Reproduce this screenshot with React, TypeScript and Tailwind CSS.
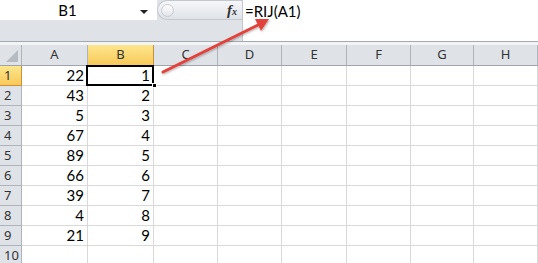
import React from 'react';

const columns = [
  { label: 'A', w: 'w-[66px]' },
  { label: 'B', w: 'w-[66px]' },
  { label: 'C', w: 'w-[64px]' },
  { label: 'D', w: 'w-[64px]' },
  { label: 'E', w: 'w-[65px]' },
  { label: 'F', w: 'w-[64px]' },
  { label: 'G', w: 'w-[63px]' },
  { label: 'H', w: 'w-[64px]' },
];

const data: [number | null, number | null][] = [
  [22, 1],
  [43, 2],
  [5, 3],
  [67, 4],
  [89, 5],
  [66, 6],
  [39, 7],
  [4, 8],
  [21, 9],
  [null, null],
];

function FormulaBar() {
  return (
    <div className="flex h-[42px] border-b border-[#a3a9b0]">
      <div className="flex w-[242px] flex-col bg-[#dfe3e8]">
        <div className="flex h-[20px]">
          <div className="relative flex w-[157px] items-center justify-center bg-white text-[15px] text-black">
            <span className="pr-[22px]">B1</span>
            <span className="absolute right-[9px] top-[10px] h-0 w-0 border-x-[4px] border-t-[4px] border-x-transparent border-t-[#222]" />
          </div>
          <div className="flex flex-1 items-center rounded-l-[11px] border border-r-0 border-[#c3c8ce] bg-gradient-to-b from-[#f6f7f9] to-[#dfe3e8] pl-[3px]">
            <span className="h-[13px] w-[13px] rounded-full border border-[#c8ccd2] bg-gradient-to-b from-[#fdfdfe] to-[#e2e5e9]" />
            <span className="ml-auto mr-[5px] font-['Liberation_Serif',serif] text-[15px] font-bold italic leading-none text-[#333]">
              f<span className="text-[10px]">x</span>
            </span>
          </div>
        </div>
      </div>
      <div className="flex-1 border-l border-[#c3c8ce] bg-white pl-[2px] pt-[1px] text-[15px] leading-[20px] text-black">
        =RIJ(A1)
      </div>
    </div>
  );
}

function Sheet() {
  return (
    <div className="flex flex-col">
      <div className="flex h-[21px] border-b border-[#9ea4ab] bg-[#dfe3e8] font-['Noto_Sans',sans-serif] text-[13px] text-[#333]">
        <div className="relative w-[22px] border-r border-[#aeb4bb]">
          <span className="absolute bottom-[3px] right-[3px] h-0 w-0 border-b-[12px] border-l-[12px] border-b-[#b6bbc1] border-l-transparent" />
        </div>
        {columns.map((c) =>
          c.label === 'B' ? (
            <div
              key={c.label}
              className={`${c.w} flex shrink-0 items-center justify-center border-r border-[#c9913c] bg-gradient-to-b from-[#fde68c] to-[#f8c957]`}
            >
              {c.label}
            </div>
          ) : (
            <div
              key={c.label}
              className={`${c.w} flex shrink-0 items-center justify-center border-r border-[#aeb4bb]`}
            >
              {c.label}
            </div>
          )
        )}
      </div>
      {data.map((row, i) => (
        <div key={i} className="flex h-[20px]">
          {i === 0 ? (
            <div className="flex w-[22px] shrink-0 items-center border-b border-r border-[#c9913c] bg-gradient-to-b from-[#fde68c] to-[#f8c957] pl-[4px] font-['Noto_Sans',sans-serif] text-[13px] text-[#333]">
              {i + 1}
            </div>
          ) : (
            <div className="flex w-[22px] shrink-0 items-center border-b border-r border-[#aeb4bb] bg-[#dfe3e8] pl-[4px] font-['Noto_Sans',sans-serif] text-[13px] text-[#333]">
              {i + 1}
            </div>
          )}
          {columns.map((c, j) => (
            <div
              key={c.label}
              className={`${c.w} flex shrink-0 items-center justify-end border-b border-r border-[#d9d9d9] pr-[3px] text-[15px] text-black`}
            >
              {j < 2 ? row[j] : null}
            </div>
          ))}
        </div>
      ))}
    </div>
  );
}

export default function App() {
  return (
    <div className="relative h-[263px] w-[538px] overflow-hidden bg-white font-['Lato','Liberation_Sans',sans-serif]">
      <FormulaBar />
      <div className="h-[3px] bg-[#f3f4f6]" />
      <Sheet />

      {/* active cell B1 */}
      <div className="pointer-events-none absolute left-[86px] top-[65px] h-[21px] w-[68px] border-2 border-black" />
      <div className="pointer-events-none absolute left-[152px] top-[83px] h-[5px] w-[5px] border border-white bg-black" />

      {/* red annotation arrow */}
      <svg className="pointer-events-none absolute left-0 top-0" width="538" height="263">
        <defs>
          <filter id="sh" x="-10%" y="-10%" width="120%" height="120%">
            <feDropShadow dx="1" dy="1" stdDeviation="0.8" floodColor="#000" floodOpacity="0.3" />
          </filter>
        </defs>
        <g filter="url(#sh)">
          <line x1="163" y1="72" x2="258" y2="25" stroke="#e2433b" strokeWidth="3" strokeLinecap="round" />
          <polygon points="269,19 255,19 261,31" fill="#e2433b" />
        </g>
      </svg>
    </div>
  );
}
